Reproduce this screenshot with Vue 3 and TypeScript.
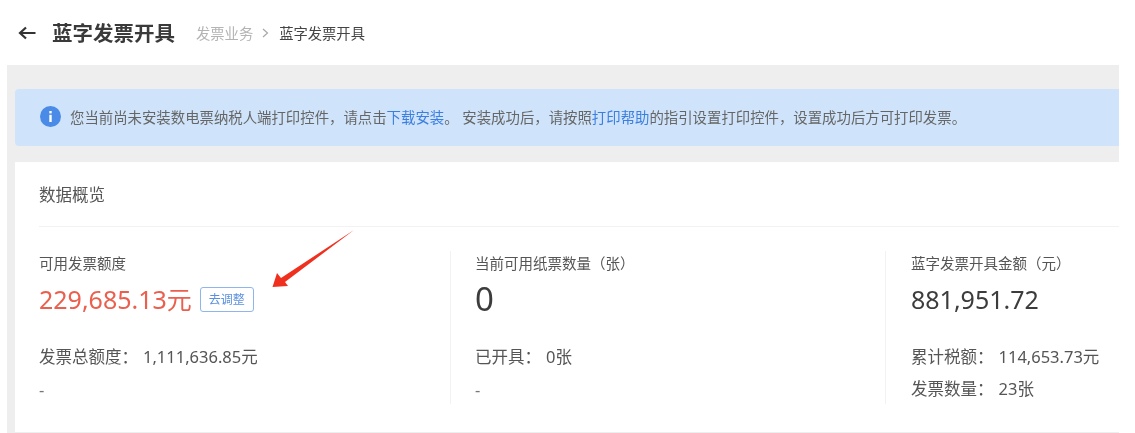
<script setup lang="ts">
interface Line { label: string; value: string }
interface Stat { title: string; value: string; lines: Line[]; dash: boolean; adjust: boolean; big: boolean }
const stats: Stat[] = [
  { title: '可用发票额度', value: '229,685.13元', lines: [{ label: '发票总额度：', value: '1,111,636.85元' }], dash: true, adjust: true, big: false },
  { title: '当前可用纸票数量（张）', value: '0', lines: [{ label: '已开具：', value: '0张' }], dash: true, adjust: false, big: true },
  { title: '蓝字发票开具金额（元）', value: '881,951.72', lines: [{ label: '累计税额：', value: '114,653.73元' }, { label: '发票数量：', value: '23张' }], dash: false, adjust: false, big: false },
]
</script>

<template>
  <div class="page">
    <header class="head">
      <svg class="back" width="18" height="14" viewBox="0 0 18 14" fill="none" stroke="#333" stroke-width="2.200">
        <path d="M17.500 7H2M8 1.500 2 7l6 5.500" />
      </svg>
      <h1>蓝字发票开具</h1>
      <nav class="crumb">
        <span class="crumb-a">发票业务</span>
        <svg width="7" height="10" viewBox="0 0 7 10" fill="none" stroke="#a8a8a8" stroke-width="1.200"><path d="M1 1l4.500 4L1 9" /></svg>
        <span class="crumb-b">蓝字发票开具</span>
      </nav>
    </header>
    <main class="body">
      <div class="notice">
        <svg class="info" width="21" height="21" viewBox="0 0 21 21">
          <circle cx="10.500" cy="10.500" r="10.500" fill="#4a8be8" />
          <rect x="9.300" y="8.800" width="2.400" height="7.200" fill="#fff" />
          <rect x="9.300" y="5" width="2.400" height="2.400" fill="#fff" />
        </svg>
        <p>您当前尚未安装数电票纳税人端打印控件，请点击<a>下载安装</a>。 安装成功后，请按照<a>打印帮助</a>的指引设置打印控件，设置成功后方可打印发票。</p>
      </div>
      <section class="card">
        <h2>数据概览</h2>
        <div class="stats">
          <div v-for="s in stats" :key="s.title" class="stat">
            <div class="title">{{ s.title }}</div>
            <div class="value-row">
              <span class="value" :class="{ red: s.adjust, big: s.big }">{{ s.value }}</span>
              <span v-if="s.adjust" class="tag">去调整</span>
            </div>
            <div class="lines">
              <div v-for="l in s.lines" :key="l.label" class="line">
                <span>{{ l.label }}</span><span class="num">{{ l.value }}</span>
              </div>
              <div v-if="s.dash" class="line dash">-</div>
            </div>
          </div>
        </div>
      </section>
    </main>
    <svg class="arrow" width="90" height="64" viewBox="0 0 90 64">
      <path d="M83 1 10 49 6 44 1.500 58 17 57 14 53 Z" fill="#f0301f" />
    </svg>
  </div>
</template>

<style>
html, body { margin: 0; background: #fff; }
</style>

<style scoped>
.page {
  position: relative;
  width: 1135px;
  height: 433px;
  overflow: hidden;
  background: #fff;
  color: #555;
  font-family: "Noto Sans", "Noto Sans CJK SC", sans-serif;
  filter: blur(0.45px);
}
.head {
  height: 65px;
  display: flex;
  align-items: center;
  padding: 0 0 0 18px;
  box-sizing: border-box;
}
.back { margin-right: 16px; }
h1 {
  margin: 0;
  font-size: 20.500px;
  font-weight: 700;
  color: #3a3a3a;
  line-height: 28px;
}
.crumb {
  display: flex;
  align-items: center;
  margin-left: 21px;
  font-size: 14.300px;
}
.crumb svg { margin: 0 10px 0 9px; }
.crumb-a { color: #b4b4b4; }
.crumb-b { color: #444; }
.body {
  width: 1112px;
  height: 368px;
  margin-left: 7px;
  padding: 24px 0 0 8px;
  box-sizing: border-box;
  background: #eeeeee;
}
.notice {
  height: 57px;
  display: flex;
  align-items: center;
  padding-left: 25px;
  padding-bottom: 3px;
  box-sizing: border-box;
  background: #cfe4fa;
  border-radius: 4px 0 0 4px;
}
.notice p {
  margin: 0 0 0 9px;
  font-size: 14.400px;
  color: #666;
  white-space: nowrap;
}
.notice a { color: #3d7fe0; }
.card {
  height: 270px;
  margin-top: 16px;
  padding: 0 0 0 24px;
  background: #fff;
}
h2 {
  height: 64px;
  margin: 0;
  border-bottom: 1px solid #f2f2f2;
  font-size: 16.500px;
  font-weight: 400;
  line-height: 65px;
  color: #555;
}
.stats {
  display: grid;
  grid-template-columns: 411px 435px 1fr;
  margin-top: 24px;
}
.stat {
  height: 153px;
  position: relative;
  padding-left: 24px;
}
.stat:first-child { padding-left: 0; }
.stat + .stat { border-left: 1px solid #f2f2f2; }
.stat:last-child { padding-left: 25px; }
.title {
  font-size: 14.500px;
  line-height: 24px;
  color: #555;
}
.value-row {
  display: flex;
  align-items: center;
  gap: 8px;
  height: 42px;
  margin-top: 3px;
}
.value {
  font-size: 25px;
  color: #3c3c3c;
  line-height: 42px;
}
.value.big { font-size: 33px; }
.value.red { color: #ea5f4e; }
.tag {
  box-sizing: border-box;
  width: 54px;
  height: 25px;
  border: 1px solid #8fb5ec;
  border-radius: 3px;
  font-size: 12px;
  line-height: 23px;
  text-align: center;
  color: #5a8fe0;
}
.lines { margin-top: 21px; }
.line {
  height: 32px;
  font-size: 16.500px;
  line-height: 32px;
  color: #555;
}
.num { margin-left: 5px; }
.dash { color: #777; font-size: 16.500px; line-height: 34px; }
.arrow {
  position: absolute;
  left: 271px;
  top: 229px;
}
</style>
